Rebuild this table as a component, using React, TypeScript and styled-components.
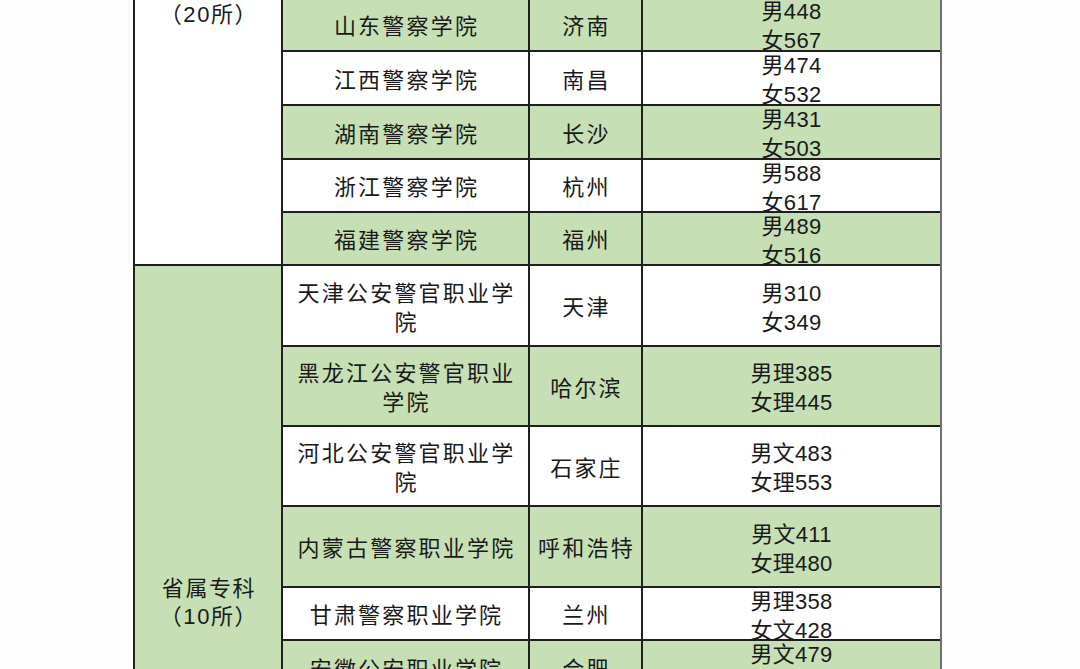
import { Fragment } from 'react';
import styled, { createGlobalStyle } from 'styled-components';

const GlobalStyle = createGlobalStyle`
  html, body {
    margin: 0;
    padding: 0;
    background: #fdfdfd;
    overflow: hidden;
  }
`;

const GREEN = '#c6dfb4';
const WHITE = '#ffffff';

const Page = styled.main`
  height: 100vh;
  overflow: hidden;
  background: #fdfdfd;
  font-family: 'Liberation Sans', 'Noto Sans CJK SC', sans-serif;
  color: #1a1a1a;
`;

// the picture is a crop of a longer sheet: its top border sits just above the fold
const Sheet = styled.div`
  display: grid;
  grid-template-columns: 146px 245px 111px 297px;
  gap: 2px;
  width: max-content;
  margin: -4px 0 0 133px;
  padding: 2px 0 2px 2px;
  background: #1f1f1f;
  border-right: 2px solid #707070;
`;

const GroupCell = styled.div<{ $green: boolean; $span: number }>`
  grid-column: 1;
  grid-row: span ${(p) => p.$span};
  display: flex;
  flex-direction: column;
  align-items: center;
  justify-content: flex-start;
  padding-left: 2px;
  background: ${(p) => (p.$green ? GREEN : WHITE)};
  font-size: 22px;
  line-height: 28px;
  letter-spacing: 1.6px;
  text-align: center;
`;

// the label is centred on the whole group, most of which is off the crop,
// so it is pinned by an offset from the top of the visible part
const GroupLabel = styled.div<{ $offset: number }>`
  display: flex;
  flex-direction: column;
  align-items: center;
  margin-top: ${(p) => p.$offset}px;
`;

const Cell = styled.div<{ $green: boolean; $h: number }>`
  display: flex;
  flex-direction: column;
  align-items: center;
  justify-content: center;
  height: ${(p) => p.$h}px;
  box-sizing: border-box;
  padding-top: 4px;
  background: ${(p) => (p.$green ? GREEN : WHITE)};
  font-size: 22px;
  line-height: 29px;
  text-align: center;
  overflow: visible;
  white-space: nowrap;
`;

const NameCell = styled(Cell)`
  grid-column: 2;
  padding-left: 13px;
  padding-right: 11px;
  letter-spacing: 2.2px;
  white-space: normal;
`;

const CityCell = styled(Cell)`
  grid-column: 3;
  padding-left: 2px;
  letter-spacing: 2.2px;
`;

const ScoreCell = styled(Cell)`
  grid-column: 4;
  letter-spacing: 0.3px;
`;

interface School {
  name: string;
  city: string;
  scores: string[];
  h: number;
}

interface Group {
  label: string[];
  green: boolean;
  offset: number;
  schools: School[];
}

const groups: Group[] = [
  {
    label: ['省属本科', '（20所）'],
    green: false,
    offset: -25,
    schools: [
      { name: '山东警察学院', city: '济南', scores: ['男448', '女567'], h: 52 },
      { name: '江西警察学院', city: '南昌', scores: ['男474', '女532'], h: 52 },
      { name: '湖南警察学院', city: '长沙', scores: ['男431', '女503'], h: 52 },
      { name: '浙江警察学院', city: '杭州', scores: ['男588', '女617'], h: 51 },
      { name: '福建警察学院', city: '福州', scores: ['男489', '女516'], h: 51 },
    ],
  },
  {
    label: ['省属专科', '（10所）'],
    green: true,
    offset: 309,
    schools: [
      { name: '天津公安警官职业学院', city: '天津', scores: ['男310', '女349'], h: 79 },
      { name: '黑龙江公安警官职业学院', city: '哈尔滨', scores: ['男理385', '女理445'], h: 78 },
      { name: '河北公安警官职业学院', city: '石家庄', scores: ['男文483', '女理553'], h: 78 },
      { name: '内蒙古警察职业学院', city: '呼和浩特', scores: ['男文411', '女理480'], h: 79 },
      { name: '甘肃警察职业学院', city: '兰州', scores: ['男理358', '女文428'], h: 51 },
      { name: '安徽公安职业学院', city: '合肥', scores: ['男文479', '女文'], h: 52 },
    ],
  },
];

const App = () => {
  let index = 0;

  return (
    <Page>
      <GlobalStyle />
      <Sheet>
        {groups.map((group) => (
          <Fragment key={group.label[0]}>
            <GroupCell $green={group.green} $span={group.schools.length}>
              <GroupLabel $offset={group.offset}>
                {group.label.map((line) => (
                  <span key={line}>{line}</span>
                ))}
              </GroupLabel>
            </GroupCell>
            {group.schools.map((school) => {
              const green = index++ % 2 === 0;
              return (
                <Fragment key={school.name}>
                  <NameCell $green={green} $h={school.h}>
                    {school.name}
                  </NameCell>
                  <CityCell $green={green} $h={school.h}>
                    {school.city}
                  </CityCell>
                  <ScoreCell $green={green} $h={school.h}>
                    {school.scores.map((line) => (
                      <span key={line}>{line}</span>
                    ))}
                  </ScoreCell>
                </Fragment>
              );
            })}
          </Fragment>
        ))}
      </Sheet>
    </Page>
  );
};

export default App;
